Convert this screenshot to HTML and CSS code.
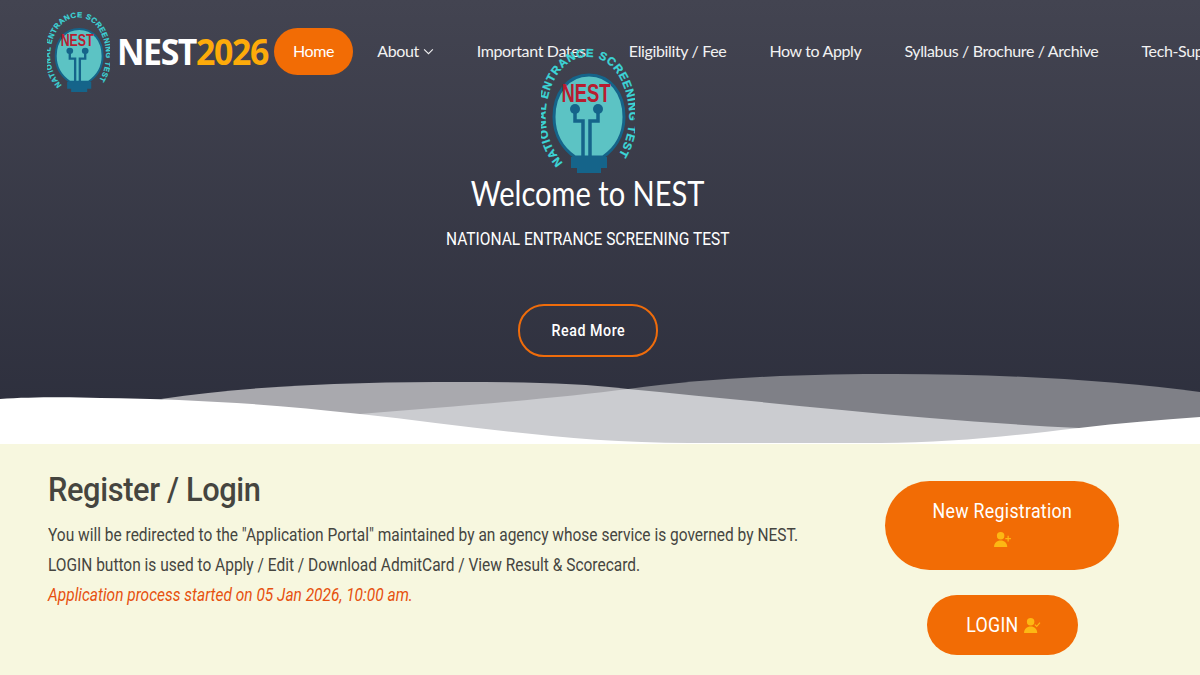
FILE: index.html
```html
<!DOCTYPE html>
<html>
<head>
    <link rel="stylesheet" href="styles.css">
</head>
<body>
    <svg class="defs">
        <defs>
            <symbol id="nest-logo" viewBox="0 0 94 126" preserveAspectRatio="none">
                <path d="M48 28C27 28 13 46 13 70c0 20 11 33 21 40h28c10-7 21-20 21-40C83 46 69 28 48 28z" fill="#5cc3c4" stroke="#15648a" stroke-width="3"/>
                <path d="M30 110h36v11H30zM36 121h24v5H36z" fill="#15648a"/>
                <path d="M34 62v12h8v36M57 62v12h-8v36" fill="none" stroke="#15648a" stroke-width="3.500"/>
                <circle cx="34" cy="62" r="5" fill="#15648a"/>
                <circle cx="57" cy="62" r="5" fill="#15648a"/>
                <text class="logo-nest" x="45" y="55" text-anchor="middle" textLength="49" lengthAdjust="spacingAndGlyphs">NEST</text>
                <path id="logo-ring" d="M22 116C4 95 2 70 7 50 13 25 28 10 47 10c19 0 33 15 39 40 5 22 2 45-14 66" fill="none"/>
                <text class="logo-ring-text"><textPath href="#logo-ring" textLength="252">NATIONAL ENTRANCE SCREENING TEST</textPath></text>
            </symbol>
        </defs>
    </svg>

    <section class="hero">
        <header class="topbar">
            <a class="brand">
                <svg class="brand-logo"><use href="#nest-logo"/></svg>
                <span class="brand-name">NEST<span class="brand-year">2026</span></span>
            </a>
            <nav class="nav">
                <a class="nav-link active">Home</a>
                <a class="nav-link">About
                    <svg class="chevron" viewBox="0 0 12 8"><path d="M1 1.500l5 5 5-5" fill="none" stroke="currentColor" stroke-width="1.200"/></svg>
                </a>
                <a class="nav-link">Important Dates</a>
                <a class="nav-link">Eligibility / Fee</a>
                <a class="nav-link">How to Apply</a>
                <a class="nav-link">Syllabus / Brochure / Archive</a>
                <a class="nav-link">Tech-Support</a>
            </nav>
        </header>

        <div class="hero-content">
            <svg class="hero-logo"><use href="#nest-logo"/></svg>
            <h1 class="hero-title">Welcome to NEST</h1>
            <p class="hero-sub">NATIONAL ENTRANCE SCREENING TEST</p>
            <a class="read-more"><span class="narrow">Read More</span></a>
        </div>

        <svg class="waves" viewBox="0 0 1200 70">
            <path fill="#a9a9ae" d="M161 25C260 10 370 8 459 8c61 0 121 1 169 7v55H300z"/>
            <path fill="#7f8087" d="M628 15C720 2 820 0 895 0c105 0 215 6 305 18v52H628z"/>
            <path fill="#cbccd0" d="M360 40c90-7 200-16 268-25 72 7 142 14 214 21 78 8 158 14 237 18v16H360z"/>
            <path fill="#fff" d="M0 25c30-2 70-2 100-1 90 1 170 6 260 16 110 12 210 29 329 29h191c70 0 130-7 199-15 41-5 81-8 121-11v27H0z"/>
        </svg>
    </section>

    <section class="register">
        <div class="register-text">
            <h2 class="register-title">Register / Login</h2>
            <p>You will be redirected to the "Application Portal" maintained by an agency whose service is governed by NEST.</p>
            <p>LOGIN button is used to Apply / Edit / Download AdmitCard / View Result &amp; Scorecard.</p>
            <p class="notice">Application process started on 05 Jan 2026, 10:00 am.</p>
        </div>
        <div class="register-actions">
            <a class="btn btn-new">
                <span class="narrow">New Registration</span>
                <svg class="user-icon" viewBox="0 0 18 16">
                    <circle cx="7" cy="4" r="4" fill="#fdb813"/>
                    <path d="M0 16c0-4.500 3-7 7-7s7 2.500 7 7z" fill="#fdb813"/>
                    <path d="M15 4v6M12 7h6" stroke="#fdb813" stroke-width="1.300"/>
                </svg>
            </a>
            <a class="btn btn-login">
                <span class="narrow">LOGIN</span>
                <svg class="user-icon" viewBox="0 0 18 16">
                    <circle cx="7" cy="4" r="4" fill="#fdb813"/>
                    <path d="M0 16c0-4.500 3-7 7-7s7 2.500 7 7z" fill="#fdb813"/>
                    <path d="M11.500 7l2 2 3.500-4" fill="none" stroke="#fdb813" stroke-width="1.200"/>
                </svg>
            </a>
        </div>
    </section>
</body>
</html>
```

FILE: styles.css
```css
html, body {
    margin: 0;
    height: 675px;
    overflow: hidden;
}
body {
    font-family: Roboto, sans-serif;
    background: #f7f7df;
}
a {
    display: block;
}
.defs {
    display: none;
}
.narrow {
    display: inline-block;
    transform: scaleX(0.89);
}
.hero {
    position: relative;
    height: 444px;
    background: linear-gradient(180deg, #434451 0%, #2c2e3c 100%);
    overflow: hidden;
}
.topbar {
    display: flex;
    align-items: flex-start;
    padding: 11px 0 0 47px;
    white-space: nowrap;
}
.brand {
    display: flex;
    align-items: center;
    height: 81px;
}
.brand-logo {
    width: 63px;
    height: 81px;
}
.brand-name {
    width: 157px;
    margin: 0 0 1px 7px;
    font-family: "Open Sans", sans-serif;
    font-weight: 700;
    font-size: 36px;
    letter-spacing: -1.5px;
    color: #fff;
    transform: scaleX(0.94);
    transform-origin: left;
}
.brand-year {
    color: #fdab0a;
}
.logo-nest {
    font-family: "Liberation Sans", sans-serif;
    font-weight: 700;
    font-size: 26px;
    fill: #b81c30;
}
.logo-ring-text {
    font-family: "Liberation Sans", sans-serif;
    font-weight: 700;
    font-size: 11.500px;
    fill: #3cd6d8;
    stroke: #3cd6d8;
    stroke-width: 0.300px;
}
.nav {
    display: flex;
    align-items: center;
    gap: 43px;
    margin: 17px 0 0 0;
}
.nav-link {
    padding-bottom: 2px;
    font-family: Lato, sans-serif;
    font-size: 16px;
    letter-spacing: -0.36px;
    color: #f2f2f2;
}
.nav-link.active {
    padding: 13px 19px 15px;
    margin-right: -19px;
    border-radius: 24px;
    background: #f26c05;
    color: #fff;
}
.chevron {
    width: 11px;
    height: 7px;
    vertical-align: 2px;
}
.hero-content {
    position: absolute;
    top: 47px;
    left: 0;
    width: 1176px;
    display: flex;
    flex-direction: column;
    align-items: center;
    color: #fff;
}
.hero-logo {
    width: 94px;
    height: 126px;
}
.hero-title {
    margin: 1px 0 0;
    font-family: Lato, sans-serif;
    font-weight: 400;
    font-size: 34px;
    line-height: 38px;
    transform: scaleX(0.855);
}
.hero-sub {
    margin: 16px 0 0;
    font-size: 18px;
    line-height: 22px;
    transform: scaleX(0.86);
}
.read-more {
    margin-top: 54px;
    width: 136px;
    height: 49px;
    line-height: 49px;
    border: 2px solid #ef6c0b;
    border-radius: 26px;
    text-align: center;
    font-weight: 500;
    font-size: 16px;
    letter-spacing: 0.6px;
}
.waves {
    position: absolute;
    left: 0;
    bottom: 0;
    width: 1200px;
    height: 70px;
    display: block;
}
.register {
    display: flex;
    justify-content: space-between;
    height: 231px;
    padding: 0 81px 0 48px;
    color: #45453f;
}
.register-text {
    flex: 0 0 760px;
    min-width: 0;
    padding-top: 23px;
    font-size: 19px;
    white-space: nowrap;
}
.register-text p {
    margin: 0;
    line-height: 30px;
    transform: scaleX(0.815);
    transform-origin: left;
}
.register-title {
    margin: 0 0 9px;
    font-weight: 500;
    font-size: 34px;
    letter-spacing: -0.4px;
    line-height: 44px;
    transform: scaleX(0.905);
    transform-origin: left;
}
.register-text .notice {
    color: #e6510f;
    font-style: italic;
}
.register-actions {
    display: flex;
    flex-direction: column;
    align-items: center;
    gap: 25px;
    padding-top: 37px;
}
.btn {
    background: #f26c05;
    color: #fff;
    font-size: 20px;
    letter-spacing: 0.3px;
    text-align: center;
}
.btn-new {
    display: flex;
    flex-direction: column;
    align-items: center;
    gap: 9px;
    box-sizing: border-box;
    width: 234px;
    height: 89px;
    padding-top: 18px;
    border-radius: 45px;
}
.btn-login {
    display: flex;
    justify-content: center;
    align-items: center;
    gap: 3px;
    box-sizing: border-box;
    width: 151px;
    height: 60px;
    border-radius: 30px;
}
.user-icon {
    width: 17px;
    height: 15px;
}
```
